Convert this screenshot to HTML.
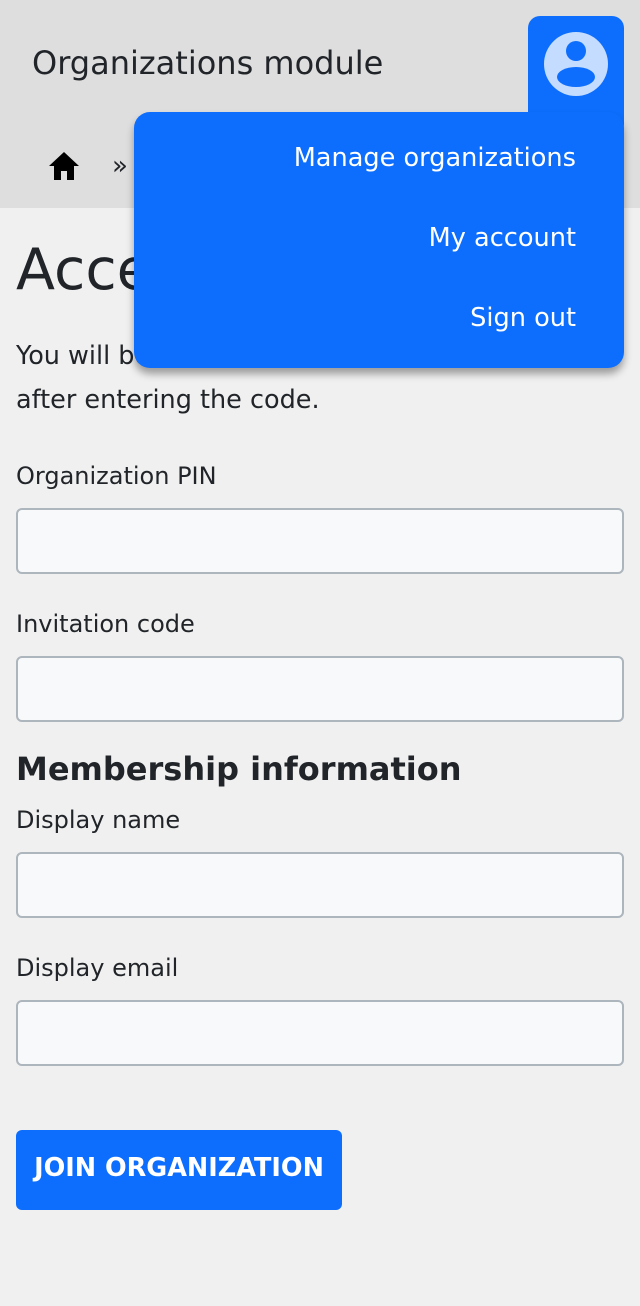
<!DOCTYPE html>
<html><head><meta charset="utf-8"><style>
*{margin:0;padding:0;box-sizing:border-box}
body{width:640px;height:1306px;background:#f0f0f0;font-family:"DejaVu Sans","Liberation Sans",sans-serif;color:#212529;position:relative;overflow:hidden}
.a{position:absolute;white-space:nowrap}
.hdr{position:absolute;left:0;top:0;width:640px;height:208px;background:#dedede}
.inp{position:absolute;left:16px;width:608px;height:66px;background:#f8f9fa;border:2px solid #adb5bd;border-radius:6px}
.lbl{font-size:24px;line-height:30px;left:16px}
.menu{position:absolute;left:134px;top:112px;width:490px;height:256px;background:#0d6efd;border-radius:16px;box-shadow:0 6px 8px rgba(0,0,0,.35)}
.mi{position:absolute;right:48px;color:#fff;font-size:25.6px;line-height:30px}
</style></head><body>
<div class="hdr"></div>
<div class="a" style="left:32px;top:43px;font-size:32px;line-height:40px;color:#212529">Organizations module</div>
<svg class="a" style="left:48px;top:151px" width="32" height="30" viewBox="0 0 32 30"><path d="M16 1 L1 15 H6 V29 H13 V20 H19 V29 H26 V15 H31 Z" fill="#000"/></svg>
<div class="a" style="left:112px;top:151px;font-size:26px;line-height:30px">»</div>
<div class="a" style="left:16px;top:236px;font-size:57px;line-height:68px">Accept invitation</div>
<div class="a" style="left:16px;top:341px;font-size:25.5px;line-height:30px">You will be added to the team</div>
<div class="a" style="left:16px;top:385px;font-size:25.5px;line-height:30px">after entering the code.</div>
<div class="a lbl" style="top:461px">Organization PIN</div>
<div class="inp" style="top:508px"></div>
<div class="a lbl" style="top:609px">Invitation code</div>
<div class="inp" style="top:656px"></div>
<div class="a" style="left:16px;top:751px;font-size:32px;line-height:36px;font-weight:bold">Membership information</div>
<div class="a lbl" style="top:805px">Display name</div>
<div class="inp" style="top:852px"></div>
<div class="a lbl" style="top:953px">Display email</div>
<div class="inp" style="top:1000px"></div>
<div class="a" style="left:16px;top:1130px;width:326px;height:80px;background:#0d6efd;border-radius:6px;color:#fff;font-weight:bold;font-size:25.5px;line-height:76px;text-align:center">JOIN ORGANIZATION</div>
<div class="a" style="left:528px;top:16px;width:96px;height:120px;background:#0d6efd;border-radius:12px"></div>
<svg class="a" style="left:544px;top:32px" width="64" height="64" viewBox="0 0 64 64"><circle cx="32" cy="32" r="32" fill="#c4dcff"/><circle cx="32" cy="19" r="10" fill="#0d6efd"/><ellipse cx="32" cy="45" rx="19" ry="10" fill="#0d6efd"/></svg>
<div class="menu">
<div class="mi" style="top:31px">Manage organizations</div>
<div class="mi" style="top:111px">My account</div>
<div class="mi" style="top:191px">Sign out</div>
</div>
</body></html>
